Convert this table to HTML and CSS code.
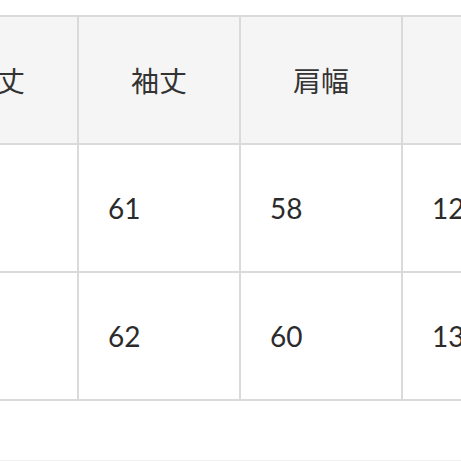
FILE: index.html
```html
<!DOCTYPE html>
<html lang="ja">
<head>
<meta charset="utf-8">
<link rel="stylesheet" href="styles.css">
</head>
<body>
<div class="viewport">
  <div class="size-table">
    <div class="cell head">着丈</div>
    <div class="cell head">袖丈</div>
    <div class="cell head">肩幅</div>
    <div class="cell head">身幅</div>
    <div class="cell">70</div>
    <div class="cell">61</div>
    <div class="cell">58</div>
    <div class="cell">126</div>
    <div class="cell">72</div>
    <div class="cell">62</div>
    <div class="cell">60</div>
    <div class="cell">132</div>
  </div>
  <div class="after"></div>
</div>
</body>
</html>
```
FILE: styles.css
```css
html, body {
  margin: 0;
  padding: 0;
  background: #ffffff;
}
.viewport {
  width: 461px;
  height: 461px;
  overflow: hidden;
  padding-top: 15px;
  box-sizing: border-box;
}
.size-table {
  display: grid;
  grid-template-columns: 160px 160px 160px 240px;
  grid-auto-rows: 126px;
  gap: 2px;
  padding: 2px;
  width: max-content;
  margin-left: -85px;
  background: #dadada;
}
.cell {
  background: #ffffff;
  display: flex;
  align-items: center;
  padding-left: 29px;
  font-family: Lato, "Noto Sans CJK JP", sans-serif;
  font-size: 28px;
  color: #2b2b2b;
}
.cell.head {
  background: #f5f5f5;
  justify-content: center;
  padding-left: 0;
  font-family: "Noto Sans CJK JP", sans-serif;
  font-size: 28px;
  color: #333333;
}
.after {
  height: 59px;
  border-bottom: 1px solid #f0f0f0;
}
```
